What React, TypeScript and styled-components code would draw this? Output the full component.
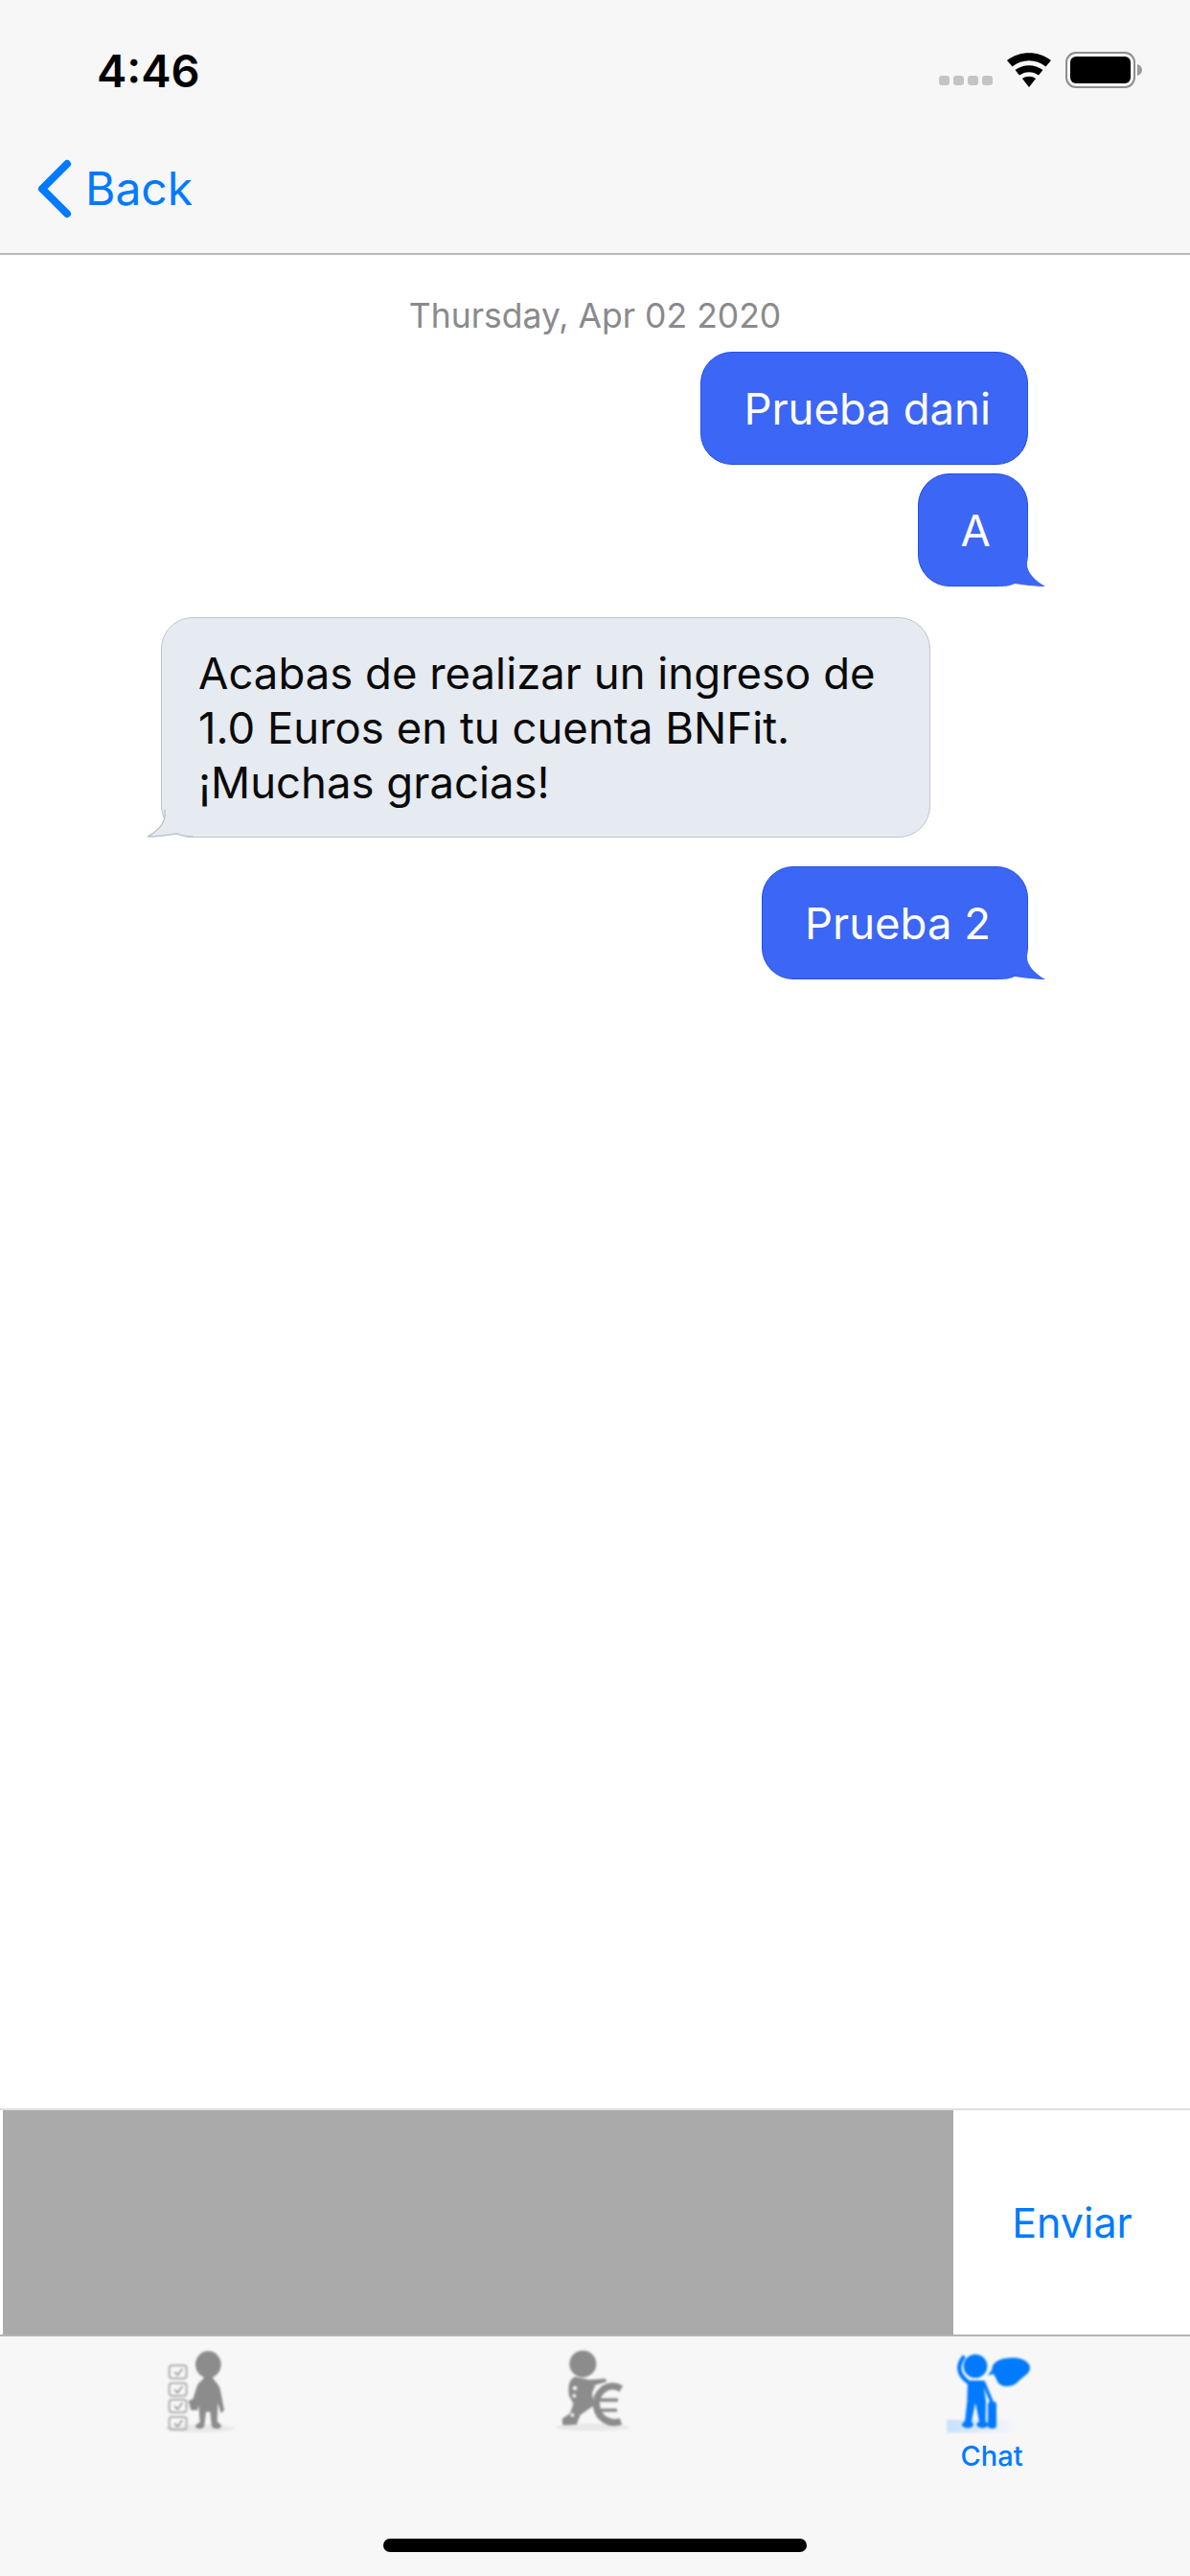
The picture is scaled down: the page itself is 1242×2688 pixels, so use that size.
import styled, { createGlobalStyle } from 'styled-components';

const Global = createGlobalStyle`
  html, body {
    margin: 0;
    padding: 0;
    background: #fff;
    font-family: Inter, "Liberation Sans", sans-serif;
  }
`;

const Screen = styled.div`
  width: 1242px;
  height: 2688px;
  display: flex;
  flex-direction: column;
  overflow: hidden;
`;

const Header = styled.header`
  height: 264px;
  flex: none;
  background: #f7f7f8;
  border-bottom: 2px solid #b9b9bb;
  display: flex;
  flex-direction: column;
`;

const StatusBar = styled.div`
  height: 146px;
  padding: 0 50px 0 101px;
  display: flex;
  align-items: center;
  justify-content: space-between;
`;

const Time = styled.div`
  font-size: 47px;
  font-weight: 600;
  color: #000;
`;

const StatusIcons = styled.div`
  display: flex;
  align-items: center;
  gap: 14px;
`;

const Signal = styled.div`
  display: flex;
  gap: 4px;
  margin-top: 22px;
`;

const SignalDot = styled.span`
  width: 11px;
  height: 10px;
  border-radius: 3px;
  background: #c4c4c6;
`;

const NavBar = styled.nav`
  display: flex;
  align-items: center;
  gap: 14px;
  padding: 18px 0 0 38px;
  color: #007aff;
`;

const BackLabel = styled.span`
  font-size: 48px;
  line-height: 66px;
`;

const Messages = styled.main`
  flex: 1;
  display: flex;
  flex-direction: column;
  padding-top: 42px;
`;

const DateLabel = styled.div`
  text-align: center;
  font-size: 35.5px;
  line-height: 44px;
  color: #8a8a8e;
  margin-bottom: 15px;
`;

const Bubble = styled.div<{ $mine?: boolean; $gap?: number }>`
  position: relative;
  box-sizing: border-box;
  margin-top: ${p => p.$gap ?? 0}px;
  font-size: 45.5px;
  line-height: 57px;
  border-radius: 33px;
  ${p =>
    p.$mine
      ? `
    align-self: flex-end;
    margin-right: 169px;
    padding: 29.5px 38px 29.5px 44px;
    background: #3c66f5;
    border: 1px solid #2450e2;
    color: #fff;
  `
      : `
    align-self: flex-start;
    margin-left: 168px;
    width: 803px;
    padding: 28.5px 0 28.5px 38px;
    background: #e6eaf1;
    border: 1.5px solid #c0c4cc;
    color: #0a0a0a;
  `}
`;

const Tail = styled.svg<{ $mine?: boolean }>`
  position: absolute;
  bottom: -1px;
  width: 50px;
  height: 33px;
  ${p => (p.$mine ? 'right: -20px;' : 'left: -17px; transform: scaleX(-1);')}
`;

const Composer = styled.section`
  height: 238px;
  flex: none;
  box-sizing: border-box;
  padding: 0 3px;
  display: flex;
  background: #fff;
  border-top: 2px solid #dcdfe2;
  border-bottom: 2px solid #b4b4b6;
`;

const InputField = styled.div`
  width: 992px;
  flex: none;
  background: #aaaaaa;
`;

const SendButton = styled.div`
  flex: 1;
  display: flex;
  align-items: center;
  justify-content: center;
  padding-left: 4px;
  font-size: 43px;
  color: #007aff;
`;

const TabBar = styled.footer`
  height: 250px;
  flex: none;
  background: #f7f7f8;
  display: flex;
  flex-direction: column;
  align-items: center;
`;

const Tabs = styled.div`
  flex: 1;
  width: 100%;
  display: grid;
  grid-template-columns: repeat(3, 1fr);
`;

const Tab = styled.div`
  display: flex;
  flex-direction: column;
  align-items: center;
  padding-top: 12px;
`;

const TabIcon = styled.svg`
  width: 100px;
  height: 90px;
  filter: blur(0.9px);
`;

const TabLabel = styled.span`
  margin-top: 6px;
  font-size: 29px;
  font-weight: 500;
  line-height: 34px;
  color: #007aff;
`;

const HomeIndicator = styled.div`
  width: 442px;
  height: 14px;
  margin-bottom: 25px;
  border-radius: 7px;
  background: #000;
`;

const Wifi = () => (
  <svg width="48" height="36" viewBox="0 0 48 36">
    <path d="M24 36 L17 27 C21 24 27 24 31 27 Z" fill="#000" />
    <path d="M14 23.5 L9.5 18 C18 11.5 30 11.5 38.5 18 L34 23.5 C28 19 20 19 14 23.5 Z" fill="#000" />
    <path d="M6.5 14.5 L1 8 C14 -2.5 34 -2.5 47 8 L41.5 14.5 C31 6 17 6 6.5 14.5 Z" fill="#000" />
  </svg>
);

const Battery = () => (
  <svg width="80" height="38" viewBox="0 0 80 38">
    <rect x="1" y="1" width="71" height="36" rx="10" fill="none" stroke="#8e8e90" strokeWidth="2" />
    <rect x="5" y="5" width="63" height="28" rx="6" fill="#000" />
    <path d="M75 13 C78 14 80 16 80 19 C80 22 78 24 75 25 Z" fill="#9a9a9c" />
  </svg>
);

const MyTail = () => (
  <Tail $mine viewBox="0 0 50 33">
    <path d="M30 0 V10 C30 18 38 27 49 33 C38 33 26 31 17 30 C11 33 5 33 0 33 Z" fill="#3c66f5" />
  </Tail>
);

const TheirTail = () => (
  <Tail viewBox="0 0 50 33">
    <path d="M30 0 V10 C30 18 38 27 48 32 C38 32 26 30 17 29 C11 32 5 32 0 32 Z" fill="#e6eaf1" />
    <path d="M30 4 V10 C30 18 38 27 48 32 C38 32 26 30 17 29 C11 32 5 32 0 32" fill="none" stroke="#c0c4cc" strokeWidth="1.5" />
  </Tail>
);

const ChecklistIcon = () => (
  <TabIcon viewBox="81 90 300 270">
    <ellipse cx="235" cy="342" rx="110" ry="12" fill="#e8e8e8" />
    {[145, 200, 252, 306].map(y => (
      <g key={y}>
        <rect x="140" y={y} width="54" height="40" rx="9" fill="none" stroke="#b0b0b0" strokeWidth="6" />
        <path d={`M156 ${y + 20} L166 ${y + 30} L181 ${y + 10}`} fill="none" stroke="#9a9a9a" strokeWidth="5" />
      </g>
    ))}
    <ellipse cx="262" cy="142" rx="40" ry="42" fill="#8c8c8c" />
    <path
      d="M248 178 C250 192 232 194 226 212 L214 250 L200 256 L208 285 L228 285 L232 270 L236 322 L222 332 C220 346 250 346 250 332 L255 290 L268 290 L272 332 C274 346 305 346 303 332 L290 320 L292 262 L302 295 L312 285 L300 222 C296 200 276 194 276 178 Z"
      fill="#8c8c8c"
    />
  </TabIcon>
);

const EuroIcon = () => (
  <TabIcon viewBox="93 90 300 270">
    <ellipse cx="235" cy="338" rx="115" ry="12" fill="#e8e8e8" />
    <circle cx="205" cy="140" r="42" fill="#8c8c8c" />
    <path
      d="M180 180 C160 190 158 215 162 240 L175 265 L165 295 L140 312 L142 332 L185 330 L197 300 L240 270 L234 232 L244 206 L280 196 L275 186 L225 190 Z"
      fill="#8c8c8c"
    />
    <path d="M325 218 C280 192 240 235 248 275 C254 312 290 332 324 320" fill="none" stroke="#8c8c8c" strokeWidth="22" />
    <path d="M245 253 H315 M240 285 H312" fill="none" stroke="#8c8c8c" strokeWidth="11" />
    <circle cx="180" cy="216" r="7" fill="#f2f2f2" />
    <circle cx="178" cy="240" r="6" fill="#f2f2f2" />
    <circle cx="172" cy="300" r="6" fill="#f2f2f2" />
  </TabIcon>
);

const ChatIcon = () => (
  <TabIcon viewBox="75 90 300 270">
    <defs>
      <linearGradient id="chatShadow" x1="0" x2="1" y1="0" y2="0">
        <stop offset="0" stopColor="#c6e1ff" />
        <stop offset="1" stopColor="#c6e1ff" stopOpacity="0" />
      </linearGradient>
    </defs>
    <rect x="85" y="315" width="220" height="40" fill="url(#chatShadow)" />
    <circle cx="174" cy="147" r="37" fill="#007aff" />
    <path d="M150 196 C124 176 114 150 136 120" fill="none" stroke="#007aff" strokeWidth="13" strokeLinecap="round" />
    <path d="M150 192 L198 192 L207 258 L206 330 L188 330 L174 262 L160 330 L140 330 L148 258 Z" fill="#007aff" />
    <path d="M198 194 L228 266" fill="none" stroke="#007aff" strokeWidth="11" />
    <ellipse cx="150" cy="330" rx="18" ry="11" fill="#007aff" />
    <ellipse cx="196" cy="330" rx="18" ry="11" fill="#007aff" />
    <rect x="213" y="258" width="27" height="84" rx="10" fill="#007aff" />
    <path
      d="M213 176 L226 158 C226 130 262 120 295 121 C322 122 346 136 345 153 C344 172 322 180 305 198 C292 212 262 216 246 200 C240 190 236 178 230 172 Z"
      fill="#007aff"
    />
  </TabIcon>
);

export default function App() {
  return (
    <Screen>
      <Global />
      <Header>
        <StatusBar>
          <Time>4:46</Time>
          <StatusIcons>
            <Signal>
              <SignalDot />
              <SignalDot />
              <SignalDot />
              <SignalDot />
            </Signal>
            <Wifi />
            <Battery />
          </StatusIcons>
        </StatusBar>
        <NavBar>
          <svg width="37" height="62" viewBox="0 0 37 62">
            <path d="M32 5 L6 31 L32 57" fill="none" stroke="#007aff" strokeWidth="8" strokeLinecap="round" strokeLinejoin="round" />
          </svg>
          <BackLabel>Back</BackLabel>
        </NavBar>
      </Header>
      <Messages>
        <DateLabel>Thursday, Apr 02 2020</DateLabel>
        <Bubble $mine>Prueba dani</Bubble>
        <Bubble $mine $gap={9}>
          A
          <MyTail />
        </Bubble>
        <Bubble $gap={32}>
          Acabas de realizar un ingreso de
          <br />
          1.0 Euros en tu cuenta BNFit.
          <br />
          ¡Muchas gracias!
          <TheirTail />
        </Bubble>
        <Bubble $mine $gap={30}>
          Prueba 2
          <MyTail />
        </Bubble>
      </Messages>
      <Composer>
        <InputField />
        <SendButton>Enviar</SendButton>
      </Composer>
      <TabBar>
        <Tabs>
          <Tab>
            <ChecklistIcon />
          </Tab>
          <Tab>
            <EuroIcon />
          </Tab>
          <Tab>
            <ChatIcon />
            <TabLabel>Chat</TabLabel>
          </Tab>
        </Tabs>
        <HomeIndicator />
      </TabBar>
    </Screen>
  );
}
